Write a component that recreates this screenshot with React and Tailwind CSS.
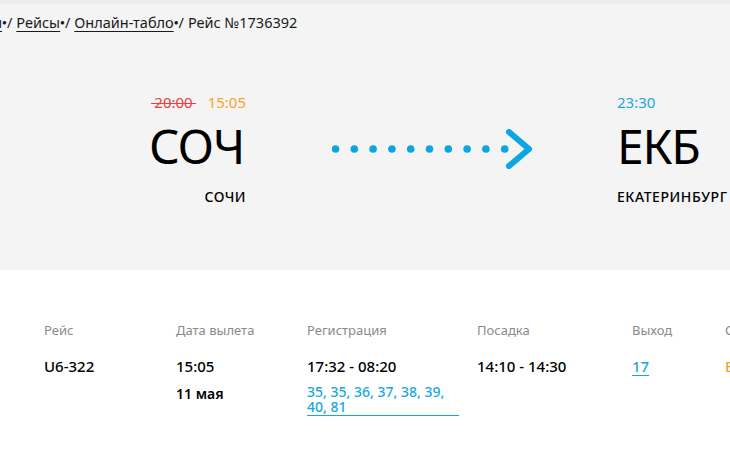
const FONT = "font-['Noto_Sans','Open_Sans',sans-serif]";

const COLUMNS = [
  { label: 'Рейс', width: 'w-[132px]' },
  { label: 'Дата вылета', width: 'w-[131px]' },
  { label: 'Регистрация', width: 'w-[170px]' },
  { label: 'Посадка', width: 'w-[155px]' },
  { label: 'Выход', width: 'w-[93px]' },
  { label: 'Статус', width: 'w-[120px]' },
];

function DottedArrow() {
  const dots = Array.from({ length: 10 }, (_, i) => i);
  return (
    <svg width="202" height="40" viewBox="0 0 202 40" className="block">
      {dots.map(i => (
        <circle key={i} cx={3.5 + i * 18.8} cy="20" r="3.8" fill="#0aa6e2" />
      ))}
      <path d="M177 3 L197 20 L177 37" fill="none" stroke="#0aa6e2" strokeWidth="6" strokeLinecap="round" strokeLinejoin="round" />
    </svg>
  );
}

function Crumb({ children }) {
  return (
    <>
      <span className="underline underline-offset-[3px] decoration-1">{children}</span>
      <span className="text-[8px]">●</span>
      <span className="mr-[4px]">/</span>
    </>
  );
}

export default function App() {
  return (
    <div className={`w-[730px] h-[460px] overflow-hidden bg-white text-black ${FONT}`}>
      {/* Hero */}
      <div className="h-[270px] bg-[#f4f4f4] border-t-4 border-[#ededed]">
        {/* Breadcrumbs */}
        <div className="flex items-center whitespace-nowrap text-[14.5px] leading-5 text-[#1a1a1a] pt-[8px] -ml-[55px]">
          <Crumb>Главная</Crumb>
          <Crumb>Рейсы</Crumb>
          <Crumb>Онлайн-табло</Crumb>
          <span>Рейс №1736392</span>
        </div>

        {/* Route */}
        <div className="flex items-start mt-[60px]">
          <div className="ml-[140px] w-[106px] shrink-0 flex flex-col items-end">
            <div className="flex gap-3 text-[15px] leading-5">
              <span className="relative text-[#e8413a] px-[3px]">
                20:00
                <span className="absolute left-0 right-0 top-[11px] h-px bg-[#e8413a]" />
              </span>
              <span className="text-[#f5a32b]">15:05</span>
            </div>
            <div className="text-[48px] leading-[60px] mt-[4px] tracking-tight mr-[2px]">СОЧ</div>
            <div className="text-[14px] font-medium tracking-[0.03em] leading-4 mt-[13px]">СОЧИ</div>
          </div>
          <div className="ml-[86px] mt-[37px] shrink-0">
            <DottedArrow />
          </div>
          <div className="ml-[83px] shrink-0 flex flex-col items-start">
            <div className="text-[15px] leading-5 text-[#18a8e0]">23:30</div>
            <div className="text-[48px] leading-[60px] mt-[4px] tracking-tight">ЕКБ</div>
            <div className="text-[14px] font-medium tracking-[0.04em] leading-4 mt-[13px] whitespace-nowrap">ЕКАТЕРИНБУРГ</div>
          </div>
        </div>
      </div>

      {/* Flight details */}
      <div className="flex pl-[44px] pt-[52px] whitespace-nowrap">
        <div className={`${COLUMNS[0].width} shrink-0`}>
          <div className="text-[13px] leading-4 text-[#8a8a8a]">{COLUMNS[0].label}</div>
          <div className="text-[15px] font-medium leading-5 mt-[18px]">U6-322</div>
        </div>
        <div className={`${COLUMNS[1].width} shrink-0`}>
          <div className="text-[13px] leading-4 text-[#8a8a8a]">{COLUMNS[1].label}</div>
          <div className="text-[15px] font-medium leading-5 mt-[18px]">15:05</div>
          <div className="text-[14px] font-semibold leading-5 mt-[8px]">11 мая</div>
        </div>
        <div className={`${COLUMNS[2].width} shrink-0`}>
          <div className="text-[13px] leading-4 text-[#8a8a8a]">{COLUMNS[2].label}</div>
          <div className="text-[15px] font-medium leading-5 mt-[18px]">17:32 - 08:20</div>
          <div className="w-[152px] mt-[8px] border-b border-[#18a8e0] text-[14px] font-medium leading-[15px] text-[#18a8e0] whitespace-normal pb-[1px]">
            35, 35, 36, 37, 38, 39, 40, 81
          </div>
        </div>
        <div className={`${COLUMNS[3].width} shrink-0`}>
          <div className="text-[13px] leading-4 text-[#8a8a8a]">{COLUMNS[3].label}</div>
          <div className="text-[15px] font-medium leading-5 mt-[18px]">14:10 - 14:30</div>
        </div>
        <div className={`${COLUMNS[4].width} shrink-0`}>
          <div className="text-[13px] leading-4 text-[#8a8a8a]">{COLUMNS[4].label}</div>
          <div className="text-[15px] font-medium leading-5 mt-[18px] text-[#18a8e0] underline underline-offset-[3px] decoration-1">17</div>
        </div>
        <div className={`${COLUMNS[5].width} shrink-0`}>
          <div className="text-[13px] leading-4 text-[#8a8a8a]">{COLUMNS[5].label}</div>
          <div className="text-[15px] font-medium leading-5 mt-[18px] text-[#f5a32b]">Вылетел</div>
        </div>
      </div>
    </div>
  );
}
